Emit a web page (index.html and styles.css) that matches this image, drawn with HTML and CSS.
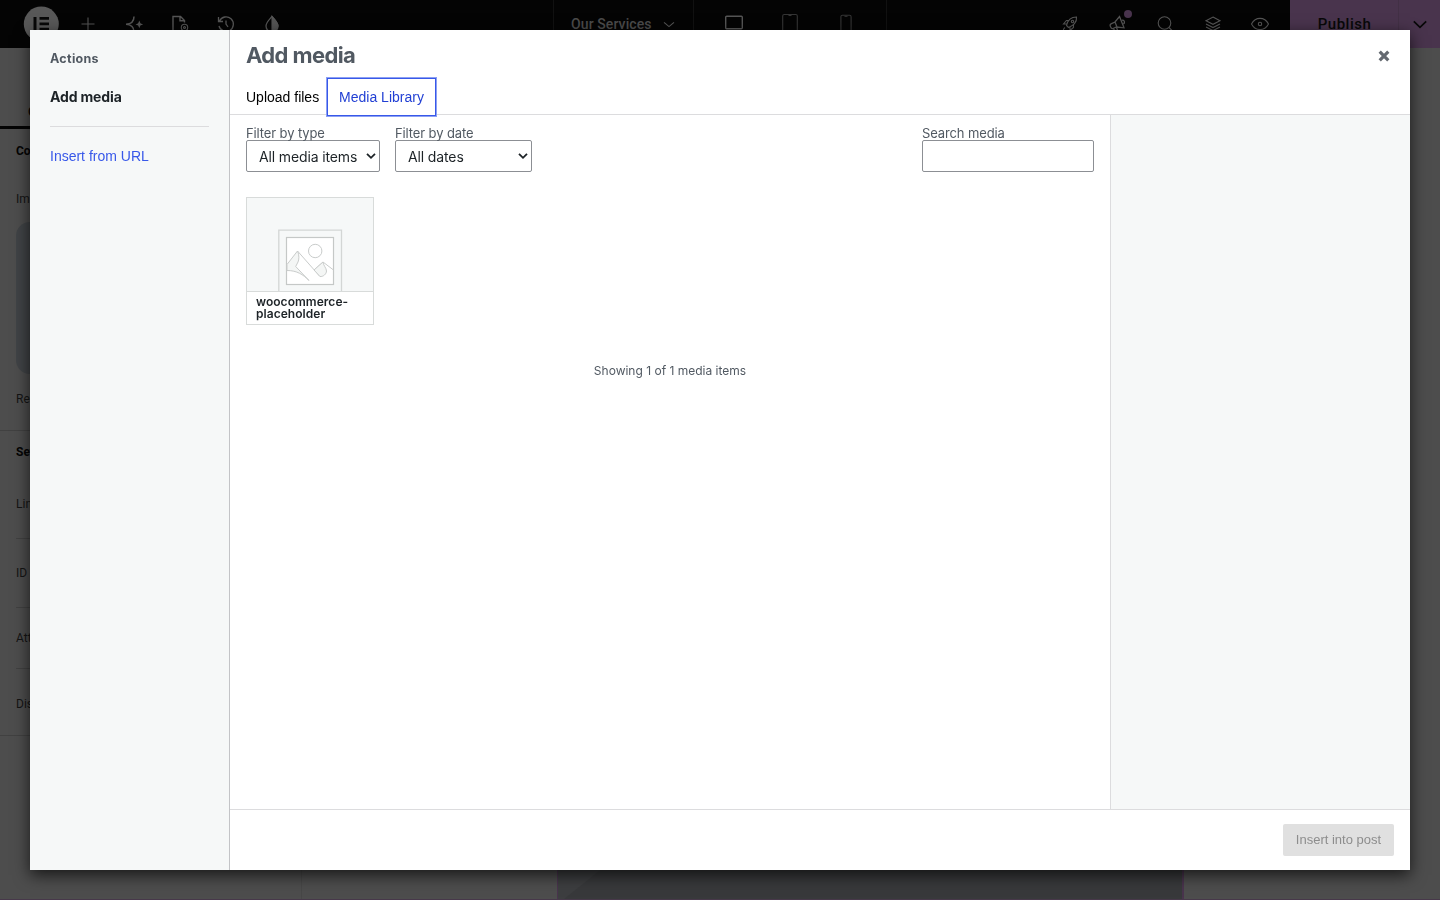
FILE: index.html
```html
<!DOCTYPE html>
<html lang="en">
<head>
<meta charset="utf-8">
<title>Add media</title>
<link rel="stylesheet" href="styles.css">
</head>
<body>
<div class="editor">
  <header class="topbar">
    <div class="tools">
      <svg class="logo" width="36" height="36" viewBox="0 0 36 36"><circle cx="18.300" cy="18" r="17.500" fill="#585858"/><path d="M10.500 11h3v13.500h-3zM16.500 11H26v2.800h-9.500zM16.500 16.400H26v2.800h-9.500zM16.500 21.700H26v2.800h-9.500z" fill="#080808"/></svg>
      <svg class="ico" viewBox="0 0 24 24"><path d="M12 5.500v13M5.500 12h13"/></svg>
      <svg class="ico" viewBox="0 0 24 24"><path d="M12 4.500C12 9 9.500 12 4 12.200c5.500.3 8 3.300 8 7.800" stroke-width="1.500"/><path d="M17.300 10l.7 1.700 1.700.7-1.700.7-.7 1.700-.7-1.700-1.700-.7 1.700-.7z" fill="#555"/></svg>
      <svg class="ico" viewBox="0 0 24 24"><path d="M9.500 20H6.500a2 2 0 0 1-1.500-2V4.500h7.500l4 4v2M12 4.500v4.300h4.500" stroke-width="1.400"/><circle cx="16.500" cy="15.500" r="3.200"/><circle cx="16.500" cy="15.500" r="1"/></svg>
      <svg class="ico" viewBox="0 0 24 24"><path d="M5.500 9A7.300 7.300 0 1 1 5 14M4.500 5v4.500H9M12 8.500V12l2 3" stroke-width="1.300"/></svg>
      <svg class="ico" viewBox="0 0 24 24"><path d="M12 4.500c-3 3.500-6 6-6 9.500a6 6 0 0 0 12 0c0-3.500-3-6-6-9.500z" stroke-width="1.300"/><path d="M12 4.500c3 3.500 6 6 6 9.500a6 6 0 0 1-6 5.500z" fill="#555"/></svg>
    </div>
    <div class="doc"><span>Our Services</span><svg width="12" height="12" viewBox="0 0 12 12"><path d="M1 4.300L6 8.600l5-4.300"/></svg></div>
    <div class="devices">
      <svg viewBox="0 0 20 24" class="on"><rect x="1.700" y="4.200" width="16.600" height="12.500" rx="1"/></svg>
      <svg viewBox="0 0 20 24"><rect x="2.700" y="2.500" width="14.600" height="19" rx="1.500"/><path d="M8.500 3.500h3"/></svg>
      <svg viewBox="0 0 20 24"><rect x="4.900" y="3.300" width="10.200" height="18" rx="1.500"/><path d="M8.500 4.300h3"/></svg>
    </div>
    <div class="right">
      <svg class="ico" viewBox="0 0 24 24"><path d="M8.500 13.500c1-4.500 4-8.500 10-8.500.7 5-3.500 9-8 10.500zM9 12H5.500l3-3.500h2.700M12 15v3.500l3.500-3v-2.700M7 15.500c-1.500.8-1.800 2-1.800 3.800"/><circle cx="14.500" cy="9.500" r="1.200"/></svg>
      <span class="news"><svg class="ico" viewBox="0 0 24 24"><path d="M13.500 4.500l4.500 11.300-7.500-.8-3.500 1.500c-2 .8-4-3.700-2-4.700l4-1.800zM9 10l2 5M7.500 16.500l2 4 2.500-1-1.500-4M16 8.300c2.300-.7 3.500 2.400 1.400 3.500" stroke-width="1.300"/></svg><i class="dot"></i></span>
      <svg class="ico" viewBox="0 0 24 24"><circle cx="11.500" cy="11" r="6.300"/><path d="M16 15.500l4.500 4.500"/></svg>
      <svg class="ico" viewBox="0 0 24 24"><path d="M12 5l7 3.700-7 3.600-7-3.600zM5 12l7 3.600 7-3.600M5 15l7 3.600 7-3.600"/></svg>
      <svg class="ico" viewBox="0 0 24 24"><path d="M3.500 12c4-7.500 13-7.500 17 0-4 7.500-13 7.500-17 0z"/><circle cx="12" cy="12" r="1.700"/></svg>
    </div>
    <div class="publish">Publish</div>
    <div class="more"><svg width="16" height="16" viewBox="0 0 16 16"><path d="M1.800 5.300L8 11.300l6.200-6"/></svg></div>
  </header>
  <div class="work">
    <aside class="panel">
      <div class="tab">General</div>
      <div class="row sec">Content</div>
      <div class="row image">Image</div>
      <div class="preview"></div>
      <div class="row res">Resolution</div>
      <div class="row sec set">Settings</div>
      <div class="row link">Link</div>
      <div class="row id">ID</div>
      <div class="row attr">Attributes</div>
      <div class="row disp">Display</div>
    </aside>
    <main class="canvas"><div class="photo"><svg width="626" height="32" viewBox="0 0 626 32"><path d="M0 0h46L6 32H0z" fill="#3d3e40"/></svg></div></main>
  </div>
</div>

<div class="modal">
  <nav class="menu">
    <h2>Actions</h2>
    <div class="current">Add media</div>
    <hr>
    <a class="from-url">Insert from URL</a>
  </nav>
  <section class="content">
    <div class="title"><h1>Add media</h1><svg class="close" width="12" height="12" viewBox="0 0 12 12"><path d="M1.700 1.700l8.600 8.600M10.300 1.700l-8.600 8.600"/></svg></div>
    <div class="tabs"><div class="upload">Upload files</div><div class="library">Media Library</div></div>
    <div class="body">
      <div class="browser">
        <div class="filters">
          <div class="field type"><label>Filter by type</label><div class="select"><span>All media items</span><svg width="10" height="8" viewBox="0 0 10 8"><path d="M1 1.800l4 4 4-4"/></svg></div></div>
          <div class="field date"><label>Filter by date</label><div class="select"><span>All dates</span><svg width="10" height="8" viewBox="0 0 10 8"><path d="M1 1.800l4 4 4-4"/></svg></div></div>
          <div class="field search"><label for="search">Search media</label><input id="search" type="text"></div>
        </div>
        <div class="item">
          <svg width="126" height="93" viewBox="0 0 126 93" fill="none" stroke="#c9cccb" stroke-width="1"><path d="M31.800 93V32.200H94.500V93" stroke-width="1.300" stroke="#d3d6d5"/><rect x="39.500" y="39.500" width="47" height="47" fill="#fff" stroke="#c5c8c7" stroke-width="1.200"/><circle cx="68.200" cy="53" r="6.700"/><path d="M40 66.500L50.500 53c2 4 1.500 9 .5 11l-2.300 4.500L62 82.500c-6-6-12-10-22-10z" fill="#f4f6f5"/><path d="M50.500 53L73 78.500M67 72l9-8 10.500 8"/><path d="M67 72l9-8c0 3 3.500 6 3.500 9s-3.500 6-6.500 5.500z" fill="#f4f6f5"/></svg>
          <div class="filename">woocommerce-<br>placeholder</div>
        </div>
        <p class="count">Showing 1 of 1 media items</p>
      </div>
      <aside class="details"></aside>
    </div>
    <footer><button disabled>Insert into post</button></footer>
  </section>
</div>
</body>
</html>
```
FILE: styles.css
```css
* { box-sizing: border-box; }
body { margin: 0; width: 1440px; height: 900px; overflow: hidden; background: #4d4d4d; font-family: "Liberation Sans", Arial, sans-serif; }
svg { display: block; flex: none; }
h1, h2, p { margin: 0; }

.editor { display: flex; flex-direction: column; height: 900px; border-bottom: 1px solid #47384a; }
.topbar { display: flex; height: 48px; background: #040404; flex: none; font-family: Roboto, sans-serif; }
.topbar svg { fill: none; stroke: #555; stroke-width: 1.1; }
.topbar .logo { stroke: none; }
.ico { width: 24px; height: 24px; }
.tools { display: flex; align-items: center; width: 553px; padding-left: 23px; gap: 22px; }
.tools .logo { margin-right: -5px; }
.doc { display: flex; align-items: center; width: 141px; padding-left: 17px; gap: 11px; border-left: 1px solid #111; border-right: 1px solid #111; font-size: 14px; font-weight: 500; letter-spacing: .1px; color: #4b4b4b; }
.devices { display: flex; align-items: center; width: 193px; padding-left: 30px; gap: 36px; border-right: 1px solid #111; }
.devices svg { width: 20px; height: 24px; stroke: #353535; }
.devices .on { stroke: #555; stroke-width: 1.4; }
.right { display: flex; align-items: center; flex: 1; padding-left: 171px; gap: 23.500px; }
.news { position: relative; }
.dot { position: absolute; right: -2px; top: -2px; width: 8px; height: 8px; border-radius: 50%; background: #49344d; }
.publish { width: 109px; padding-left: 1px; line-height: 48px; text-align: center; background: #49344d; color: #080808; font-size: 15px; font-weight: 500; letter-spacing: .5px; border-right: 1px solid #423045; }
.more { display: flex; align-items: center; justify-content: center; width: 41px; background: #49344d; }
.topbar .more svg { stroke: #080808; stroke-width: 1.7; }

.work { display: flex; flex: 1; min-height: 0; }
.panel { width: 302px; border-right: 1px solid #474747; font: 12px Roboto, sans-serif; color: #141414; }
.tab { height: 81px; padding: 57px 0 0 28px; border-bottom: 3px solid #040404; color: #040404; font-weight: 500; }
.row { display: flex; align-items: center; margin-left: 16px; border-bottom: 1px solid #414141; }
.row.sec { height: 43px; font-weight: 700; color: #040404; border: 0; }
.row.image { height: 50px; padding-top: 3px; border: 0; }
.preview { width: 270px; height: 152px; margin-left: 16px; border-radius: 14px; background: #404346; }
.row.res { height: 57px; margin-left: 0; padding: 0 0 6px 16px; }
.row.sec.set { height: 42px; }
.row.link { height: 66px; padding-bottom: 3px; }
.row.id { height: 69px; }
.row.attr { height: 61px; }
.row.disp { height: 67px; margin-left: 0; padding: 4px 0 0 16px; }
.canvas { display: flex; flex: 1; align-items: flex-end; padding-left: 255px; }
.photo { width: 627px; height: 32px; background: #38393b; border-left: 1px solid #49344d; border-right: 2px solid #49344d; overflow: hidden; }

.modal { position: fixed; inset: 30px; display: flex; background: #fff; box-shadow: 0 5px 15px rgba(0, 0, 0, .7); }
.menu { width: 200px; padding: 20px 20px 0; background: #f6f8f8; border-right: 1px solid #c3c4c7; }
.menu h2 { font: 700 12.500px/17px Inter, sans-serif; color: #515962; letter-spacing: .3px; }
.current { margin-top: 21px; font: 700 14px/18px Inter, sans-serif; letter-spacing: -.15px; color: #1d2327; }
.menu hr { height: 1px; margin: 20px 0; border: 0; background: #dcdcde; }
.from-url { display: block; font-size: 14px; line-height: 18px; color: #3858e9; }
.content { display: flex; flex: 1; flex-direction: column; }
.title { display: flex; justify-content: space-between; height: 48px; padding: 0 20px 0 16px; align-items: flex-start; }
h1 { font: 700 22px/50px Inter, sans-serif; letter-spacing: -.6px; color: #515962; }
.close { margin-top: 20px; fill: none; stroke: #646970; stroke-width: 3.200; }
.tabs { display: flex; height: 37px; padding-left: 16px; border-bottom: 1px solid #dcdcde; font-size: 14px; color: #000; }
.upload { width: 81px; line-height: 38px; }
.library { z-index: 1; width: 109px; height: 38px; line-height: 37px; text-align: center; border: 1px solid #3858e9; box-shadow: 0 0 0 1px #8ca0f3; background: #fff; color: #213fd4; }
.body { display: flex; flex: 1; }
.browser { width: 880px; padding: 11px 16px 0; }
.filters { display: flex; gap: 15px; height: 71px; }
.field { font-family: Inter, sans-serif; }
.field label { display: block; height: 14px; line-height: 15px; font-size: 13px; letter-spacing: -.12px; color: #515962; }
.type { width: 134px; }
.date { width: 137px; }
.search { width: 172px; margin-left: auto; }
.select, input { display: flex; align-items: center; justify-content: space-between; width: 100%; height: 32px; padding: 2px 3px 0 12px; border: 1px solid #8c8f94; border-radius: 2px; background: #fff; color: #1d2327; font-size: 14px; line-height: 18px; letter-spacing: -.13px; white-space: nowrap; }
.select svg { fill: none; stroke: #1d2327; stroke-width: 1.8; margin-top: -2px; }
.item { width: 128px; height: 128px; border: 1px solid #d8dbda; background: #f6f8f8; }
.filename { height: 33px; padding: 4px 9px; border-top: 1px solid #d8dbda; background: #fff; font: 600 12px/12px Inter, sans-serif; letter-spacing: .04px; color: #1d2327; }
.count { margin-top: 38px; text-align: center; font: 12px/16px Inter, sans-serif; color: #515962; }
.details { flex: 1; background: #f6f8f8; border-left: 1px solid #dcdcde; }
footer { display: flex; height: 61px; padding: 14px 16px 0; justify-content: flex-end; border-top: 1px solid #dcdcde; }
button { width: 111px; height: 32px; padding: 0 0 1px; border: 0; border-radius: 2px; background: #e0e0e0; color: #8d8d8d; font: 13px "Liberation Sans", sans-serif; }
```
